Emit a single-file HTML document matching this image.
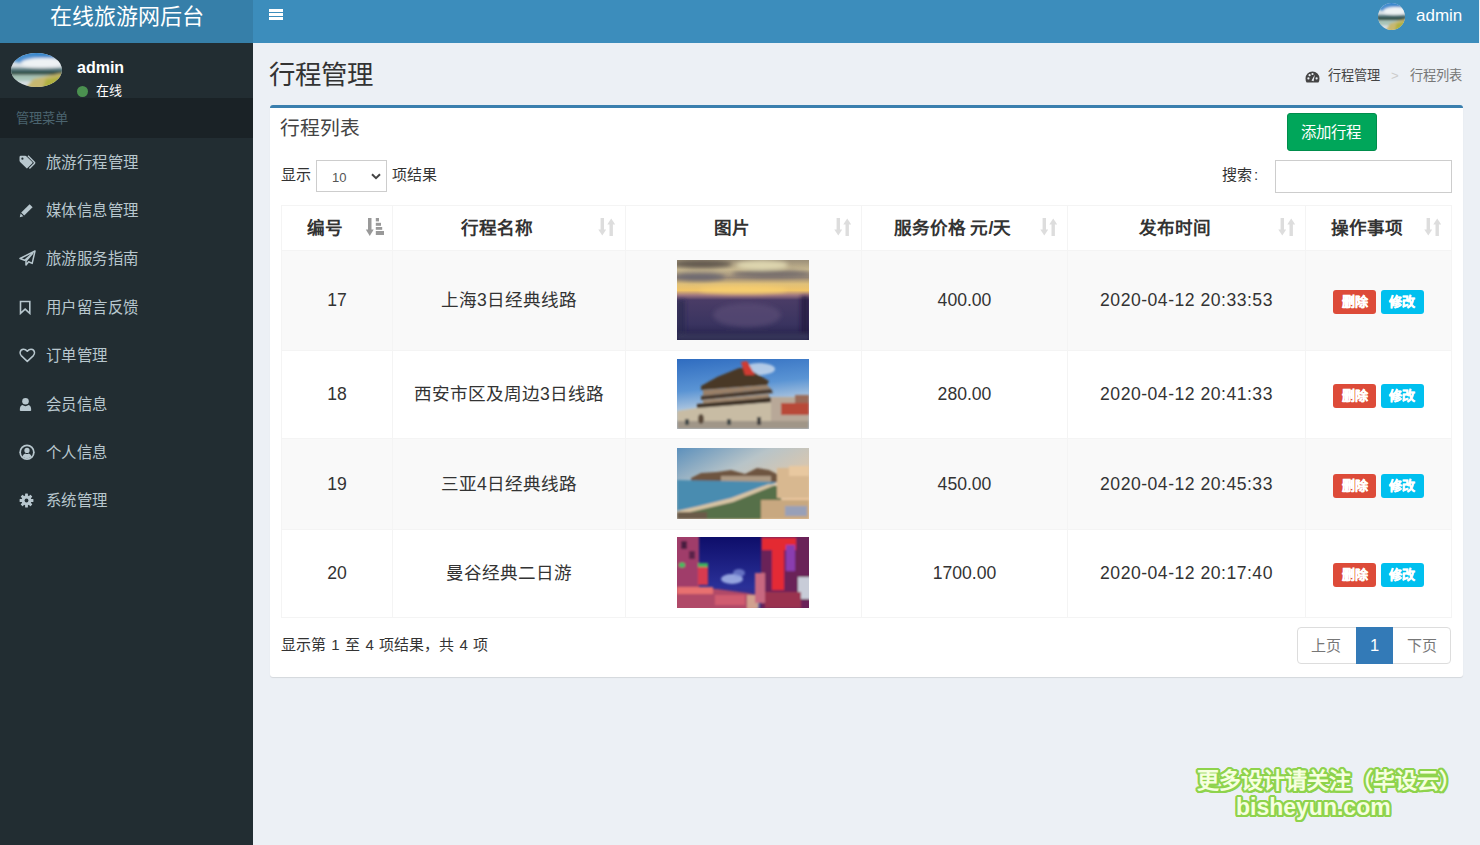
<!DOCTYPE html>
<html lang="zh-CN"><head><meta charset="utf-8">
<style>
*{box-sizing:border-box;margin:0;padding:0}
html,body{width:1480px;height:845px;overflow:hidden}
body{background:#ecf0f5;font-family:"Liberation Sans",sans-serif;color:#333;position:relative}
.a{position:absolute;white-space:nowrap}
#logo{left:0;top:0;width:253px;height:43px;background:#367fa9}
#nav{left:253px;top:0;width:1226px;height:43px;background:#3c8dbc}
#side{left:0;top:43px;width:253px;height:802px;background:#222d32}
.t{line-height:1;}
.menu{left:46px;font-size:15.4px;letter-spacing:.4px;color:#b8c7ce;line-height:1}
.ico{left:19px;width:17px;height:17px}
#box{left:270px;top:105px;width:1193px;height:572px;background:#fff;border-top:3px solid #3a7fae;border-radius:3px;box-shadow:0 1px 1px rgba(0,0,0,.1)}
table{position:absolute;left:281px;top:205px;border-collapse:collapse;table-layout:fixed}
td,th{line-height:22px;border:1px solid #f4f4f4;text-align:center;vertical-align:middle;padding:0 0 1px 0;font-size:17.6px;color:#333;font-weight:normal}
th{font-weight:bold;height:45px;position:relative;padding:0 24px 0 0}
tr.odd td{background:#f9f9f9}
.lbl{position:relative;top:2px;display:inline-block;width:43px;height:24px;border-radius:3px;color:#fff;font-size:13px;font-weight:bold;-webkit-text-stroke:.4px #fff;line-height:24px;text-align:center;vertical-align:middle}
</style></head><body>
<div id="logo" class="a"></div>
<div id="nav" class="a"></div>
<div class="a t" style="left:50px;top:6px;font-size:22px;color:#fff">在线旅游网后台</div>
<!-- hamburger -->
<div class="a" style="left:269px;top:9px;width:14px;height:3px;background:#fff"></div>
<div class="a" style="left:269px;top:13px;width:14px;height:3px;background:#fff"></div>
<div class="a" style="left:269px;top:17px;width:14px;height:3px;background:#fff"></div>
<!-- nav user -->
<svg class="a" style="left:1378px;top:3px" width="27" height="27" viewBox="0 0 50 34" preserveAspectRatio="none">
<defs><clipPath id="cln"><ellipse cx="25" cy="17" rx="25" ry="17"/></clipPath><filter id="fbn" x="-20%" y="-20%" width="140%" height="140%"><feGaussianBlur stdDeviation="1.6"/></filter></defs>
<g clip-path="url(#cln)"><rect width="50" height="34" fill="#d8dfe4"/>
<g filter="url(#fbn)">
<rect x="-5" y="-5" width="60" height="10" fill="#3a88cc"/>
<ellipse cx="14" cy="6" rx="14" ry="4" fill="#4a90d0"/>
<ellipse cx="30" cy="10" rx="20" ry="5" fill="#eef2f4"/>
<rect x="-5" y="15" width="60" height="4" fill="#5a7a80"/>
<rect x="-5" y="18" width="60" height="4" fill="#2a4a40"/>
<rect x="-5" y="22" width="60" height="6" fill="#a8c4b8"/>
<polygon points="22,26 50,20 55,40 10,40" fill="#c8b870"/>
<polygon points="34,26 55,22 55,40 30,40" fill="#b0b040"/>
</g></g></svg>
<div class="a t" style="left:1416px;top:7px;font-size:17px;color:#fff">admin</div>

<div id="side" class="a"></div>
<svg class="a" style="left:11px;top:53px" width="51" height="34" viewBox="0 0 50 34" preserveAspectRatio="none">
<defs><clipPath id="cls"><ellipse cx="25" cy="17" rx="25" ry="17"/></clipPath><filter id="fbs" x="-20%" y="-20%" width="140%" height="140%"><feGaussianBlur stdDeviation="1.6"/></filter></defs>
<g clip-path="url(#cls)"><rect width="50" height="34" fill="#d8dfe4"/>
<g filter="url(#fbs)">
<rect x="-5" y="-5" width="60" height="10" fill="#3a88cc"/>
<ellipse cx="14" cy="6" rx="14" ry="4" fill="#4a90d0"/>
<ellipse cx="30" cy="10" rx="20" ry="5" fill="#eef2f4"/>
<rect x="-5" y="15" width="60" height="4" fill="#5a7a80"/>
<rect x="-5" y="18" width="60" height="4" fill="#2a4a40"/>
<rect x="-5" y="22" width="60" height="6" fill="#a8c4b8"/>
<polygon points="22,26 50,20 55,40 10,40" fill="#c8b870"/>
<polygon points="34,26 55,22 55,40 30,40" fill="#b0b040"/>
</g></g></svg>
<div class="a t" style="left:77px;top:60px;font-size:16px;font-weight:bold;color:#fff">admin</div>
<div class="a" style="left:77px;top:86px;width:11px;height:11px;border-radius:50%;background:#4b9150"></div>
<div class="a t" style="left:96px;top:84px;font-size:13px;color:#fff">在线</div>
<div class="a" style="left:0;top:98px;width:253px;height:40px;background:#1a2226"></div>
<div class="a t" style="left:16px;top:112px;font-size:13.2px;color:#4b646f">管理菜单</div>

<div class="a menu" style="top:155px">旅游行程管理</div>
<div class="a menu" style="top:203px">媒体信息管理</div>
<div class="a menu" style="top:251px">旅游服务指南</div>
<div class="a menu" style="top:300px">用户留言反馈</div>
<div class="a menu" style="top:348px">订单管理</div>
<div class="a menu" style="top:397px">会员信息</div>
<div class="a menu" style="top:445px">个人信息</div>
<div class="a menu" style="top:493px">系统管理</div>

<!-- content header -->
<div class="a t" style="left:269px;top:62px;font-size:26.4px;color:#333">行程管理</div>
<div class="a t" style="left:1328px;top:69px;font-size:13.2px;color:#444">行程管理</div>
<div class="a t" style="left:1391px;top:69px;font-size:13.2px;color:#ccc">&gt;</div>
<div class="a t" style="left:1410px;top:69px;font-size:13.2px;color:#777">行程列表</div>

<div id="box" class="a"></div>
<div class="a t" style="left:280px;top:119px;font-size:19.8px;color:#444">行程列表</div>
<div class="a" style="left:1287px;top:113px;width:90px;height:38px;background:#00a65a;border:1px solid #008d4c;border-radius:3px"></div>
<div class="a t" style="left:1301px;top:125px;font-size:15.4px;color:#fff">添加行程</div>

<div class="a t" style="left:281px;top:167px;font-size:15px;color:#333">显示</div>
<div class="a" style="left:316px;top:160px;width:71px;height:32px;border:1px solid #cdcdcd;background:#fff"></div>
<div class="a t" style="left:332px;top:171px;font-size:13px;color:#555">10</div>
<div class="a t" style="left:392px;top:167px;font-size:15px;color:#333">项结果</div>
<div class="a t" style="left:1222px;top:167px;font-size:15px;color:#333">搜索<span style="margin-left:2px">:</span></div>
<div class="a" style="left:1275px;top:160px;width:177px;height:33px;border:1px solid #cdcdcd;background:#fff"></div>

<table>
<colgroup><col style="width:111px"><col style="width:233px"><col style="width:236px"><col style="width:206px"><col style="width:238px"><col style="width:146px"></colgroup>
<tr><th>编号</th><th>行程名称</th><th>图片</th><th>服务价格 元/天</th><th>发布时间</th><th>操作事项</th></tr>
<tr class="odd" style="height:100px"><td>17</td><td>上海3日经典线路</td><td></td><td>400.00</td><td style="letter-spacing:.5px">2020-04-12 20:33:53</td><td><span class="lbl" style="background:#dd4b39">删除</span> <span class="lbl" style="background:#00c0ef">修改</span></td></tr>
<tr style="height:88px"><td>18</td><td>西安市区及周边3日线路</td><td></td><td>280.00</td><td style="letter-spacing:.5px">2020-04-12 20:41:33</td><td><span class="lbl" style="background:#dd4b39">删除</span> <span class="lbl" style="background:#00c0ef">修改</span></td></tr>
<tr class="odd" style="height:91px"><td>19</td><td>三亚4日经典线路</td><td></td><td>450.00</td><td style="letter-spacing:.5px">2020-04-12 20:45:33</td><td><span class="lbl" style="background:#dd4b39">删除</span> <span class="lbl" style="background:#00c0ef">修改</span></td></tr>
<tr style="height:88px"><td>20</td><td>曼谷经典二日游</td><td></td><td>1700.00</td><td style="letter-spacing:.5px">2020-04-12 20:17:40</td><td><span class="lbl" style="background:#dd4b39">删除</span> <span class="lbl" style="background:#00c0ef">修改</span></td></tr>
</table>


<!-- sidebar icons -->
<svg class="a" style="left:19px;top:155px" width="18" height="15" viewBox="0 0 18 15" fill="#b8c7ce">
<path d="M0.5 2.2Q0.5 0.8 1.9 0.8H6.2Q7 0.8 7.6 1.4L13.3 7.1Q13.9 7.7 13.3 8.3L8.5 13.1Q7.9 13.7 7.3 13.1L1.1 6.9Q0.5 6.3 0.5 5.5Z"/>
<circle cx="3.4" cy="3.7" r="1.1" fill="#222d32"/>
<path d="M9 0.8L15.4 7.2Q16 7.8 15.4 8.4L10.4 13.4" fill="none" stroke="#b8c7ce" stroke-width="1.4"/>
</svg>
<svg class="a" style="left:19px;top:203px" width="15" height="15" viewBox="0 0 15 15" fill="#b8c7ce">
<path d="M10.6 1.2L13.6 4.2L5.2 12.6L2.2 9.6Z"/><path d="M1.6 10.4L4.4 13.2L0.8 14.2Z"/>
</svg>
<svg class="a" style="left:19px;top:250px" width="17" height="16" viewBox="0 0 17 16">
<path d="M16 1L1 8.5L5.6 10.2L13.5 3.5L7 11L7 15L9.6 11.8L13.2 13.4Z" fill="none" stroke="#b8c7ce" stroke-width="1.5" stroke-linejoin="round"/>
</svg>
<svg class="a" style="left:19px;top:300px" width="13" height="15" viewBox="0 0 13 15">
<path d="M1.5 1.5H10.8V13.4L6.15 9.2L1.5 13.4Z" fill="none" stroke="#b8c7ce" stroke-width="1.6" stroke-linejoin="miter"/>
</svg>
<svg class="a" style="left:19px;top:348px" width="17" height="15" viewBox="0 0 17 15">
<path d="M8.3 13.4L2.2 7.6Q0.9 6.2 1.1 4.4Q1.5 1.4 4.4 1.2Q6.6 1.1 8.3 3.3Q10 1.1 12.2 1.2Q15.1 1.4 15.5 4.4Q15.7 6.2 14.4 7.6Z" fill="none" stroke="#b8c7ce" stroke-width="1.5" stroke-linejoin="round"/>
</svg>
<svg class="a" style="left:19px;top:397px" width="14" height="15" viewBox="0 0 14 15" fill="#b8c7ce">
<circle cx="6.5" cy="4.2" r="3.3"/><path d="M0.8 13.2Q0.8 8.6 3.5 8.1Q5 9.2 6.5 9.2Q8 9.2 9.5 8.1Q12.2 8.6 12.2 13.2Q12.2 14 11.2 14H1.8Q0.8 14 0.8 13.2Z"/>
</svg>
<svg class="a" style="left:19px;top:444px" width="17" height="17" viewBox="0 0 17 17">
<circle cx="8" cy="8.3" r="7.7" fill="#b8c7ce"/><circle cx="8" cy="8.3" r="6" fill="#222d32"/>
<circle cx="8" cy="6.4" r="2.6" fill="#b8c7ce"/><path d="M3.3 12.6Q4.5 9.9 6.2 9.6Q8 10.6 9.8 9.6Q11.5 9.9 12.7 12.6Q10.8 14.4 8 14.4Q5.2 14.4 3.3 12.6Z" fill="#b8c7ce"/>
</svg>
<svg class="a" style="left:19px;top:493px" width="15" height="15" viewBox="-7.5 -7.5 15 15" fill="#b8c7ce">
<path d="M-1.3 -6.8H1.3L1.7 -4.9L3.3 -4.2L4.9 -5.3L6.7 -3.5L5.6 -1.9L6.3 -0.3L8 0V0Z" fill="none"/>
<g id="cog"><circle r="4.9"/>
<rect x="-1.4" y="-6.9" width="2.8" height="13.8" rx=".5"/>
<rect x="-1.4" y="-6.9" width="2.8" height="13.8" rx=".5" transform="rotate(45)"/>
<rect x="-1.4" y="-6.9" width="2.8" height="13.8" rx=".5" transform="rotate(90)"/>
<rect x="-1.4" y="-6.9" width="2.8" height="13.8" rx=".5" transform="rotate(135)"/></g>
<circle r="1.9" fill="#222d32"/>
</svg>
<!-- breadcrumb dashboard -->
<svg class="a" style="left:1305px;top:71px" width="15" height="12" viewBox="0 0 15 12">
<path d="M7.5 0.5A7 7 0 0 0 0.5 7.5Q0.5 10 1.6 11.5H13.4Q14.5 10 14.5 7.5A7 7 0 0 0 7.5 0.5Z" fill="#444"/>
<circle cx="3.4" cy="7.4" r="1.1" fill="#ecf0f5"/><circle cx="4.6" cy="4.2" r="1.1" fill="#ecf0f5"/>
<circle cx="7.5" cy="3" r="1.1" fill="#ecf0f5"/><circle cx="11.6" cy="7.4" r="1.1" fill="#ecf0f5"/>
<path d="M6.5 9.6L9.8 3.8L8.6 10.2Z" fill="#ecf0f5"/>
</svg>
<!-- select chevron -->
<svg class="a" style="left:371px;top:173px" width="10" height="7" viewBox="0 0 10 7">
<path d="M1 1.2L5 5.2L9 1.2" fill="none" stroke="#444" stroke-width="2"/>
</svg>
<svg class="a" style="left:365px;top:217px" width="20" height="20" viewBox="0 0 20 20" fill="#999">
<rect x="3" y="1" width="3.5" height="13"/><path d="M0.8 12.5H8.7L4.75 19Z"/>
<rect x="10.8" y="1" width="3.2" height="3.4"/><rect x="10.8" y="5.8" width="5.2" height="3"/><rect x="10.8" y="10" width="6.4" height="2.8"/><rect x="10.8" y="14" width="8.2" height="4"/>
</svg>
<svg class="a" style="left:598.0px;top:217px" width="18" height="20" viewBox="0 0 18 20" fill="#ddd">
<rect x="2.6" y="1" width="3.4" height="13"/><path d="M0.3 12.5H8.2L4.3 18.5Z"/>
<rect x="11.5" y="6" width="3.4" height="13"/><path d="M9.3 7.5H17.2L13.2 1.5Z"/>
</svg>
<svg class="a" style="left:833.5px;top:217px" width="18" height="20" viewBox="0 0 18 20" fill="#ddd">
<rect x="2.6" y="1" width="3.4" height="13"/><path d="M0.3 12.5H8.2L4.3 18.5Z"/>
<rect x="11.5" y="6" width="3.4" height="13"/><path d="M9.3 7.5H17.2L13.2 1.5Z"/>
</svg>
<svg class="a" style="left:1040.0px;top:217px" width="18" height="20" viewBox="0 0 18 20" fill="#ddd">
<rect x="2.6" y="1" width="3.4" height="13"/><path d="M0.3 12.5H8.2L4.3 18.5Z"/>
<rect x="11.5" y="6" width="3.4" height="13"/><path d="M9.3 7.5H17.2L13.2 1.5Z"/>
</svg>
<svg class="a" style="left:1278.0px;top:217px" width="18" height="20" viewBox="0 0 18 20" fill="#ddd">
<rect x="2.6" y="1" width="3.4" height="13"/><path d="M0.3 12.5H8.2L4.3 18.5Z"/>
<rect x="11.5" y="6" width="3.4" height="13"/><path d="M9.3 7.5H17.2L13.2 1.5Z"/>
</svg>
<svg class="a" style="left:1423.5px;top:217px" width="18" height="20" viewBox="0 0 18 20" fill="#ddd">
<rect x="2.6" y="1" width="3.4" height="13"/><path d="M0.3 12.5H8.2L4.3 18.5Z"/>
<rect x="11.5" y="6" width="3.4" height="13"/><path d="M9.3 7.5H17.2L13.2 1.5Z"/>
</svg>
<!-- images -->
<svg class="a" style="left:677px;top:260px" width="132" height="80" viewBox="0 0 132 80">
<defs><filter id="b1" x="-20%" y="-20%" width="140%" height="140%"><feGaussianBlur stdDeviation="2"/></filter>
<linearGradient id="g1" x1="0" y1="0" x2="0" y2="1">
<stop offset="0" stop-color="#9a8e78"/><stop offset="0.12" stop-color="#c8b890"/><stop offset="0.22" stop-color="#9a8a78"/>
<stop offset="0.30" stop-color="#e0c078"/><stop offset="0.38" stop-color="#f0c468"/><stop offset="0.44" stop-color="#a07880"/>
<stop offset="0.5" stop-color="#4a3c66"/><stop offset="0.8" stop-color="#3a3460"/><stop offset="1" stop-color="#242048"/></linearGradient>
<clipPath id="c1"><rect width="132" height="80"/></clipPath></defs>
<rect width="132" height="80" fill="url(#g1)"/>
<g clip-path="url(#c1)" filter="url(#b1)">
<ellipse cx="25" cy="4" rx="30" ry="4" fill="#645a50"/>
<ellipse cx="85" cy="5" rx="26" ry="5" fill="#f0eac0" opacity=".7"/>
<ellipse cx="22" cy="17" rx="26" ry="4" fill="#6a6670" opacity=".9"/>
<ellipse cx="95" cy="14" rx="40" ry="4" fill="#6a6468" opacity=".8"/>
<ellipse cx="66" cy="30" rx="44" ry="4" fill="#f8d070" opacity=".8"/>
<ellipse cx="70" cy="55" rx="34" ry="12" fill="#5e5078" opacity=".6"/>
<rect x="0" y="40" width="8" height="40" fill="#2a2850" opacity=".7"/>
<rect x="124" y="36" width="8" height="44" fill="#1e1c40" opacity=".8"/>
<rect x="0" y="74" width="132" height="6" fill="#38385a"/>
</g></svg>
<svg class="a" style="left:677px;top:359px" width="132" height="70" viewBox="0 0 132 70">
<defs><filter id="b2" x="-20%" y="-20%" width="140%" height="140%"><feGaussianBlur stdDeviation="1.2"/></filter>
<linearGradient id="g2" x1="0" y1="0" x2="0.2" y2="1">
<stop offset="0" stop-color="#2f6cc0"/><stop offset="0.45" stop-color="#5a94d4"/><stop offset="0.75" stop-color="#b8cce0"/></linearGradient>
<clipPath id="c2"><rect width="132" height="70"/></clipPath></defs>
<rect width="132" height="70" fill="url(#g2)"/>
<g clip-path="url(#c2)" filter="url(#b2)">
<ellipse cx="82" cy="10" rx="16" ry="6" fill="#dfe8f2" opacity=".7"/>
<polygon points="24,27 40,18 62,9 70,9 92,22 90,26 24,31" fill="#4a3828"/>
<polygon points="26,31 90,26 94,30 26,37" fill="#9a8068"/>
<polygon points="24,37 94,30 96,34 24,41" fill="#4a3a2e"/>
<polygon points="26,41 92,35 92,40 26,45" fill="#a08870"/>
<polygon points="20,45 98,38 100,43 20,50" fill="#3e3228"/>
<polygon points="64,3 70,2 78,16 68,16" fill="#d03a30"/>
<polygon points="0,52 20,49 98,43 100,68 0,68" fill="#c8bca4"/>
<rect x="94" y="38" width="38" height="30" fill="#b8a898"/>
<rect x="104" y="44" width="28" height="12" fill="#b84838"/>
<rect x="118" y="36" width="14" height="8" fill="#9a6a58"/>
<rect x="0" y="62" width="132" height="8" fill="#a09688"/>
<ellipse cx="24" cy="60" rx="3" ry="5" fill="#5a4a3a"/>
<rect x="8" y="60" width="4" height="6" fill="#404848"/><rect x="50" y="60" width="4" height="6" fill="#404848"/><rect x="80" y="58" width="4" height="8" fill="#404040"/>
</g></svg>
<svg class="a" style="left:677px;top:448px" width="132" height="71" viewBox="0 0 132 71">
<defs><filter id="b3" x="-20%" y="-20%" width="140%" height="140%"><feGaussianBlur stdDeviation="1.2"/></filter>
<linearGradient id="g3" x1="0" y1="0" x2="0.8" y2="0.8">
<stop offset="0" stop-color="#5c90bc"/><stop offset="0.45" stop-color="#b8c4c8"/><stop offset="1" stop-color="#ecc8a0"/></linearGradient>
<clipPath id="c3"><rect width="132" height="71"/></clipPath></defs>
<rect width="132" height="71" fill="url(#g3)"/>
<g clip-path="url(#c3)" filter="url(#b3)">
<polygon points="14,30 24,25 40,24 54,22 68,26 80,20 92,22 104,28 106,34 14,34" fill="#6e5440"/>
<rect x="44" y="28" width="50" height="8" fill="#c8b8a0" opacity=".7"/>
<polygon points="0,32 100,34 90,38 52,52 20,60 0,64" fill="#4a8cb0"/>
<polygon points="0,64 20,60 52,52 90,38 100,38 110,71 0,71" fill="#56704a"/>
<polygon points="0,63 22,58 54,50 92,36 96,38 56,54 22,62 0,67" fill="#d8c4a4"/>
<rect x="100" y="20" width="32" height="30" fill="#d8b890"/>
<rect x="112" y="18" width="20" height="10" fill="#e8c8a0"/>
<rect x="84" y="52" width="48" height="19" fill="#c8a880"/>
<rect x="108" y="58" width="22" height="10" fill="#98a0b8"/>
<rect x="0" y="64" width="30" height="7" fill="#6a5a48"/>
</g></svg>
<svg class="a" style="left:677px;top:537px" width="132" height="71" viewBox="0 0 132 71">
<defs><filter id="b4" x="-20%" y="-20%" width="140%" height="140%"><feGaussianBlur stdDeviation="1.3"/></filter>
<linearGradient id="g4" x1="0" y1="0" x2="0" y2="1"><stop offset="0" stop-color="#0e0e6a"/><stop offset="0.7" stop-color="#2a3098"/><stop offset="1" stop-color="#402a80"/></linearGradient>
<clipPath id="c4"><rect width="132" height="71"/></clipPath></defs>
<rect width="132" height="71" fill="url(#g4)"/>
<g clip-path="url(#c4)" filter="url(#b4)">
<rect x="-5" y="-5" width="27" height="80" fill="#a03c6a"/>
<rect x="4" y="4" width="6" height="8" fill="#4a1a40"/><rect x="12" y="14" width="6" height="8" fill="#5a2048"/>
<ellipse cx="5" cy="28" rx="3" ry="2.5" fill="#40c060"/>
<rect x="21" y="28" width="10" height="20" fill="#d83a50"/>
<rect x="21" y="26" width="10" height="4" fill="#40b060"/>
<ellipse cx="55" cy="42" rx="11" ry="5" fill="#a8b8ec" opacity=".85"/>
<ellipse cx="62" cy="36" rx="6" ry="4" fill="#8090d8" opacity=".7"/>
<polygon points="-5,50 40,52 70,56 80,58 80,76 -5,76" fill="#b04868"/>
<rect x="0" y="50" width="36" height="7" fill="#e87070"/>
<rect x="38" y="58" width="30" height="10" fill="#d86070" opacity=".8"/>
<rect x="70" y="58" width="12" height="14" fill="#e0c8a0" opacity=".7"/>
<rect x="84" y="-5" width="55" height="80" fill="#6a2458"/>
<rect x="85" y="1" width="34" height="12" fill="#e42a30"/>
<rect x="95" y="13" width="12" height="40" fill="#e42a34"/>
<rect x="109" y="8" width="9" height="26" fill="#8a3cb0"/>
<rect x="121" y="40" width="13" height="22" fill="#c8ccd8"/>
<rect x="78" y="36" width="10" height="30" fill="#c86880"/>
<rect x="88" y="55" width="36" height="16" fill="#9a3050"/>
</g></svg>
<div class="a t" style="left:281px;top:637px;font-size:15px;color:#333;word-spacing:1.2px">显示第 1 至 4 项结果，共 4 项</div>
<div class="a" style="left:1297px;top:627px;width:154px;height:37px;border:1px solid #ddd;border-radius:4px;background:#fff"></div>
<div class="a" style="left:1356px;top:627px;width:37px;height:37px;background:#337ab7"></div>
<div class="a t" style="left:1311px;top:638px;font-size:15px;color:#777">上页</div>
<div class="a t" style="left:1370px;top:637px;font-size:16.5px;color:#fff">1</div>
<div class="a t" style="left:1407px;top:638px;font-size:15px;color:#777">下页</div>

<div class="a t" style="left:1197px;top:770px;font-size:22px;font-weight:900;color:#f6ffe0;text-shadow:2px 0px 0 #8ed34c,-2px 0px 0 #8ed34c,0px 2px 0 #8ed34c,0px -2px 0 #8ed34c,1.5px 1.5px 0 #8ed34c,-1.5px 1.5px 0 #8ed34c,1.5px -1.5px 0 #8ed34c,-1.5px -1.5px 0 #8ed34c,2px 1px 0 #8ed34c,2px -1px 0 #8ed34c,-2px 1px 0 #8ed34c,-2px -1px 0 #8ed34c,1px 2px 0 #8ed34c,-1px 2px 0 #8ed34c,1px -2px 0 #8ed34c,-1px -2px 0 #8ed34c">更多设计请关注（毕设云）</div>
<div class="a t" style="left:1236px;top:796px;font-size:23px;font-weight:bold;color:#f6ffe0;text-shadow:2px 0px 0 #8ed34c,-2px 0px 0 #8ed34c,0px 2px 0 #8ed34c,0px -2px 0 #8ed34c,1.5px 1.5px 0 #8ed34c,-1.5px 1.5px 0 #8ed34c,1.5px -1.5px 0 #8ed34c,-1.5px -1.5px 0 #8ed34c,2px 1px 0 #8ed34c,2px -1px 0 #8ed34c,-2px 1px 0 #8ed34c,-2px -1px 0 #8ed34c,1px 2px 0 #8ed34c,-1px 2px 0 #8ed34c,1px -2px 0 #8ed34c,-1px -2px 0 #8ed34c">bisheyun.com</div>
</body></html>
